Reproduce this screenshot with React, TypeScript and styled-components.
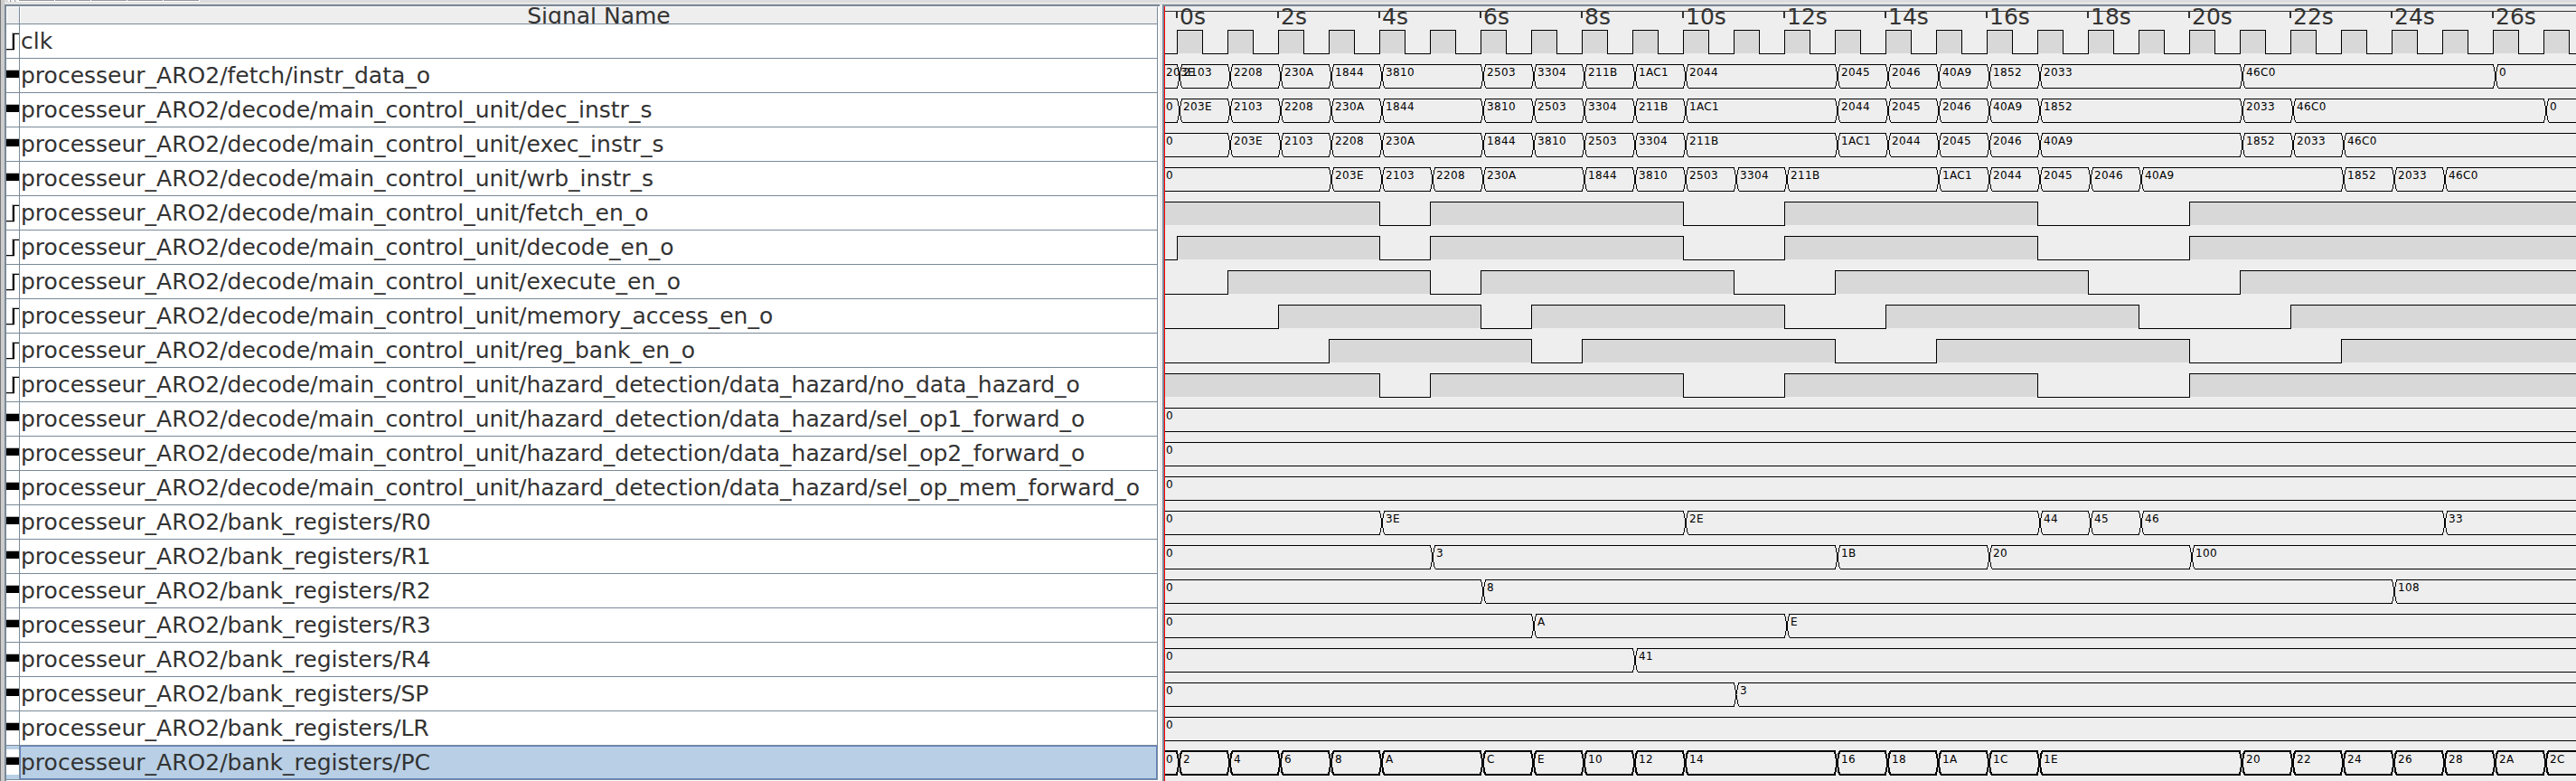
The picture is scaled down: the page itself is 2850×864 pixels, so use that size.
import React from "react";
import styled, { createGlobalStyle } from "styled-components";

const ROW = 38;
const STEP = 56;
const ORIGIN = 13; // x of t = 0 inside the wave area
const WAVE_WIDTH = 1561;
const STEPS = 28;

const GlobalStyle = createGlobalStyle`
  html, body { margin: 0; padding: 0; background: #eeeeee; overflow: hidden; }
  * { box-sizing: border-box; }
`;

const Window = styled.div`
  width: 2850px;
  height: 864px;
  display: flex;
  background: #eeeeee;
  font-family: "DejaVu Sans", sans-serif;
  color: #333333;
  overflow: hidden;
`;

const FrameEdge = styled.div`
  flex: none;
  width: 5px;
  border-left: 1px solid #777777;
  background: #cccccc;
`;

const Content = styled.div`
  flex: 1;
  min-width: 0;
  display: flex;
  flex-direction: column;
`;

const Toolbar = styled.div`
  flex: none;
  height: 5px;
  display: flex;
  align-items: flex-start;
  padding-left: 4px;
  background: linear-gradient(#dcdcdc 0 3px, #f4f4f4 3px 4px, #cfcfcf 4px 5px);
`;

const ToolbarGrip = styled.div`
  width: 12px;
  height: 2px;
  background: repeating-linear-gradient(90deg, #ffffff 0 2px, #999999 2px 3px, #eeeeee 3px 5px);
`;

const ToolButtonEdge = styled.div`
  width: 40px;
  height: 2px;
  border-right: 1px solid #ffffff;
  background: linear-gradient(#999999 0 1px, #ffffff 1px 2px);
`;

const Body = styled.div`
  flex: 1;
  display: flex;
  min-height: 0;
`;

const TablePane = styled.div`
  flex: none;
  width: 1278px;
  border-top: 2px solid #7a8a99;
  border-left: 2px solid #7a8a99;
  background: #ffffff;
`;

const HeaderRow = styled.div`
  display: flex;
  height: 20px;
  width: 1274px;
  border-bottom: 1px solid #7a8a99;
`;

const HeaderCell = styled.div<{ $width: number }>`
  width: ${(p) => p.$width}px;
  height: 19px;
  border-top: 1px solid #ffffff;
  border-left: 1px solid #ffffff;
  border-right: 1px solid #7a8a99;
  background: #eeeeee;
  overflow: hidden;
`;

const HeaderText = styled.div`
  height: 28px;
  margin-top: -4px;
  padding-left: 22px;
  text-align: center;
  font-size: 25px;
  line-height: 28px;
  white-space: nowrap;
`;

const SignalRow = styled.div`
  display: flex;
  height: ${ROW}px;
  width: 1274px;
  border-bottom: 1px solid #7a8a99;
`;

const IconCell = styled.div<{ $selected?: boolean }>`
  width: 15px;
  height: 37px;
  border-right: 1px solid #7a8a99;
  padding: 4px 0 5px;
  background: ${(p) => (p.$selected ? "#b8cfe5" : "#ffffff")};
`;

const IconSvg = styled.svg`
  display: block;
  width: 14px;
  height: 28px;
  background: #ffffff;
`;

const NameCell = styled.div<{ $selected?: boolean }>`
  flex: 1;
  height: 37px;
  border-right: 1px solid #7a8a99;
  box-shadow: ${(p) => (p.$selected ? "inset 0 0 0 1px #6382bf" : "none")};
  background: ${(p) => (p.$selected ? "#b8cfe5" : "#ffffff")};
  padding-left: 1px;
  font-size: 25px;
  line-height: 37px;
  white-space: nowrap;
`;

const Divider = styled.div`
  flex: none;
  width: 3px;
  background: #eeeeee;
`;

const WavePane = styled.div`
  flex: 1;
  min-width: 0;
  border-top: 2px solid #7a8a99;
  border-left: 2px solid #7a8a99;
  background: #eeeeee;
`;

const WaveArea = styled.div`
  height: 100%;
  border-left: 1px solid #ff0000;
`;

const WaveSvg = styled.svg`
  display: block;
  overflow: hidden;
`;

const AxisText = styled.text`
  font-size: 25px;
  fill: #333333;
`;

const ValueText = styled.text`
  font-size: 12px;
  letter-spacing: 0.36px;
  fill: #000000;
`;

type BitSignal = { kind: "bit"; name: string; high: boolean; edges: number[] };
type BusSignal = {
  kind: "bus";
  name: string;
  initial: string;
  changes: [number, string][];
  selected?: boolean;
};
type Signal = BitSignal | BusSignal;

const bit = (name: string, high: boolean, edges: number[]): BitSignal => ({ kind: "bit", name, high, edges });

/* Values are written as "step:value" pairs. */
const bus = (name: string, initial: string, changes = "", selected = false): BusSignal => ({
  kind: "bus",
  name,
  initial,
  selected,
  changes: changes
    .split(" ")
    .filter(Boolean)
    .map((c) => {
      const [t, v] = c.split(":");
      return [Number(t), v] as [number, string];
    }),
});

const UNIT = "processeur_ARO2/decode/main_control_unit/";
const BANK = "processeur_ARO2/bank_registers/";

const SIGNALS: Signal[] = [
  bit("clk", false, Array.from({ length: STEPS * 2 }, (_, i) => i / 2)),
  bus("processeur_ARO2/fetch/instr_data_o", "203E", "0:2103 1:2208 2:230A 3:1844 4:3810 6:2503 7:3304 8:211B 9:1AC1 10:2044 13:2045 14:2046 15:40A9 16:1852 17:2033 21:46C0 26:0"),
  bus(UNIT + "dec_instr_s", "0", "0:203E 1:2103 2:2208 3:230A 4:1844 6:3810 7:2503 8:3304 9:211B 10:1AC1 13:2044 14:2045 15:2046 16:40A9 17:1852 21:2033 22:46C0 27:0"),
  bus(UNIT + "exec_instr_s", "0", "1:203E 2:2103 3:2208 4:230A 6:1844 7:3810 8:2503 9:3304 10:211B 13:1AC1 14:2044 15:2045 16:2046 17:40A9 21:1852 22:2033 23:46C0"),
  bus(UNIT + "wrb_instr_s", "0", "3:203E 4:2103 5:2208 6:230A 8:1844 9:3810 10:2503 11:3304 12:211B 15:1AC1 16:2044 17:2045 18:2046 19:40A9 23:1852 24:2033 25:46C0"),
  bit(UNIT + "fetch_en_o", true, [4, 5, 10, 12, 17, 20]),
  bit(UNIT + "decode_en_o", false, [0, 4, 5, 10, 12, 17, 20]),
  bit(UNIT + "execute_en_o", false, [1, 5, 6, 11, 13, 18, 21]),
  bit(UNIT + "memory_access_en_o", false, [2, 6, 7, 12, 14, 19, 22]),
  bit(UNIT + "reg_bank_en_o", false, [3, 7, 8, 13, 15, 20, 23]),
  bit(UNIT + "hazard_detection/data_hazard/no_data_hazard_o", true, [4, 5, 10, 12, 17, 20]),
  bus(UNIT + "hazard_detection/data_hazard/sel_op1_forward_o", "0"),
  bus(UNIT + "hazard_detection/data_hazard/sel_op2_forward_o", "0"),
  bus(UNIT + "hazard_detection/data_hazard/sel_op_mem_forward_o", "0"),
  bus(BANK + "R0", "0", "4:3E 10:2E 17:44 18:45 19:46 25:33"),
  bus(BANK + "R1", "0", "5:3 13:1B 16:20 20:100"),
  bus(BANK + "R2", "0", "6:8 24:108"),
  bus(BANK + "R3", "0", "7:A 12:E"),
  bus(BANK + "R4", "0", "9:41"),
  bus(BANK + "SP", "0", "11:3"),
  bus(BANK + "LR", "0"),
  bus(BANK + "PC", "0", "0:2 1:4 2:6 3:8 4:A 6:C 7:E 8:10 9:12 10:14 13:16 14:18 15:1A 16:1C 17:1E 21:20 22:22 23:24 24:26 25:28 26:2A 27:2C", true),
];

const HIGH = 6;
const LOW = 32;

const BitIcon = () => (
  <IconSvg viewBox="0 0 14 28" shapeRendering="crispEdges">
    <path d="M6.5 23V5.5H14M0 24.5H9" fill="none" stroke="#bbb" />
    <path d="M0 23.5H8V6.5H14" fill="none" stroke="#000" />
    <path d="M8 6V24" fill="none" stroke="#000" strokeWidth="2" />
  </IconSvg>
);

const BusIcon = () => (
  <IconSvg viewBox="0 0 14 28" shapeRendering="crispEdges">
    <rect y="8" width="14" height="1" fill="#bbb" />
    <rect y="9" width="14" height="8" fill="#000" />
  </IconSvg>
);

const BitWave = ({ signal }: { signal: BitSignal }) => {
  const blocks: [number, number][] = [];
  let high = signal.high;
  let start = 0;
  let line = `M0 ${(high ? HIGH : LOW) + 0.5}`;
  for (const t of signal.edges) {
    const x = ORIGIN + t * STEP;
    if (high) blocks.push([start, x]);
    high = !high;
    start = x;
    line += `H${x + 0.5}V${(high ? HIGH : LOW) + 0.5}`;
  }
  if (high) blocks.push([start, WAVE_WIDTH]);
  line += `H${WAVE_WIDTH}`;
  return (
    <WaveSvg width={WAVE_WIDTH} height={ROW}>
      {blocks.map(([a, b]) => (
        <rect key={a} x={a} y={HIGH} width={b - a} height={LOW - HIGH} fill="#d8d8d8" />
      ))}
      <path d={line} fill="none" stroke="#000" shapeRendering="crispEdges" />
    </WaveSvg>
  );
};

const BusWave = ({ signal }: { signal: BusSignal }) => {
  const off = signal.selected ? 0 : 0.5;
  const top = HIGH + off;
  const bottom = LOW + off;
  let upper = `M0 ${top}`;
  let lower = `M0 ${bottom}`;
  for (const [t] of signal.changes) {
    const a = ORIGIN + t * STEP + off;
    const b = a + 5;
    upper += `H${a}L${b} ${bottom}M${b} ${top}`;
    lower += `H${a}L${b} ${top}M${b} ${bottom}`;
  }
  return (
    <WaveSvg width={WAVE_WIDTH} height={ROW}>
      <path
        d={`${upper}H${WAVE_WIDTH}${lower}H${WAVE_WIDTH}`}
        fill="none"
        stroke="#000"
        strokeWidth={signal.selected ? 2 : 1}
        shapeRendering="crispEdges"
      />
      <ValueText x={1} y={19}>{signal.initial}</ValueText>
      {signal.changes.map(([t, v]) => (
        <ValueText key={t} x={ORIGIN + t * STEP + 7} y={19}>{v}</ValueText>
      ))}
    </WaveSvg>
  );
};

const TimeAxis = () => (
  <WaveSvg width={WAVE_WIDTH} height={20}>
    <path d={`M0 5.5H${WAVE_WIDTH}`} stroke="#333" shapeRendering="crispEdges" />
    {Array.from({ length: STEPS / 2 }, (_, i) => {
      const x = ORIGIN + i * 2 * STEP;
      return (
        <React.Fragment key={i}>
          <path d={`M${x} 5V13`} stroke="#333" strokeWidth="2" shapeRendering="crispEdges" />
          <AxisText x={x + 3} y={20}>{`${i * 2}s`}</AxisText>
        </React.Fragment>
      );
    })}
  </WaveSvg>
);

export default function App() {
  return (
    <>
      <GlobalStyle />
      <Window>
        <FrameEdge />
        <Content>
          <Toolbar>
            <ToolbarGrip />
            {[0, 1, 2, 3, 4].map((i) => (
              <ToolButtonEdge key={i} />
            ))}
          </Toolbar>
          <Body>
            <TablePane>
              <HeaderRow>
                <HeaderCell $width={15} />
                <HeaderCell $width={1259}>
                  <HeaderText>Signal Name</HeaderText>
                </HeaderCell>
              </HeaderRow>
              {SIGNALS.map((s) => {
                const selected = s.kind === "bus" && s.selected;
                return (
                  <SignalRow key={s.name}>
                    <IconCell $selected={selected}>{s.kind === "bit" ? <BitIcon /> : <BusIcon />}</IconCell>
                    <NameCell $selected={selected}>{s.name}</NameCell>
                  </SignalRow>
                );
              })}
            </TablePane>
            <Divider />
            <WavePane>
              <WaveArea>
                <TimeAxis />
                {SIGNALS.map((s) => (s.kind === "bit" ? <BitWave key={s.name} signal={s} /> : <BusWave key={s.name} signal={s} />))}
              </WaveArea>
            </WavePane>
          </Body>
        </Content>
      </Window>
    </>
  );
}
